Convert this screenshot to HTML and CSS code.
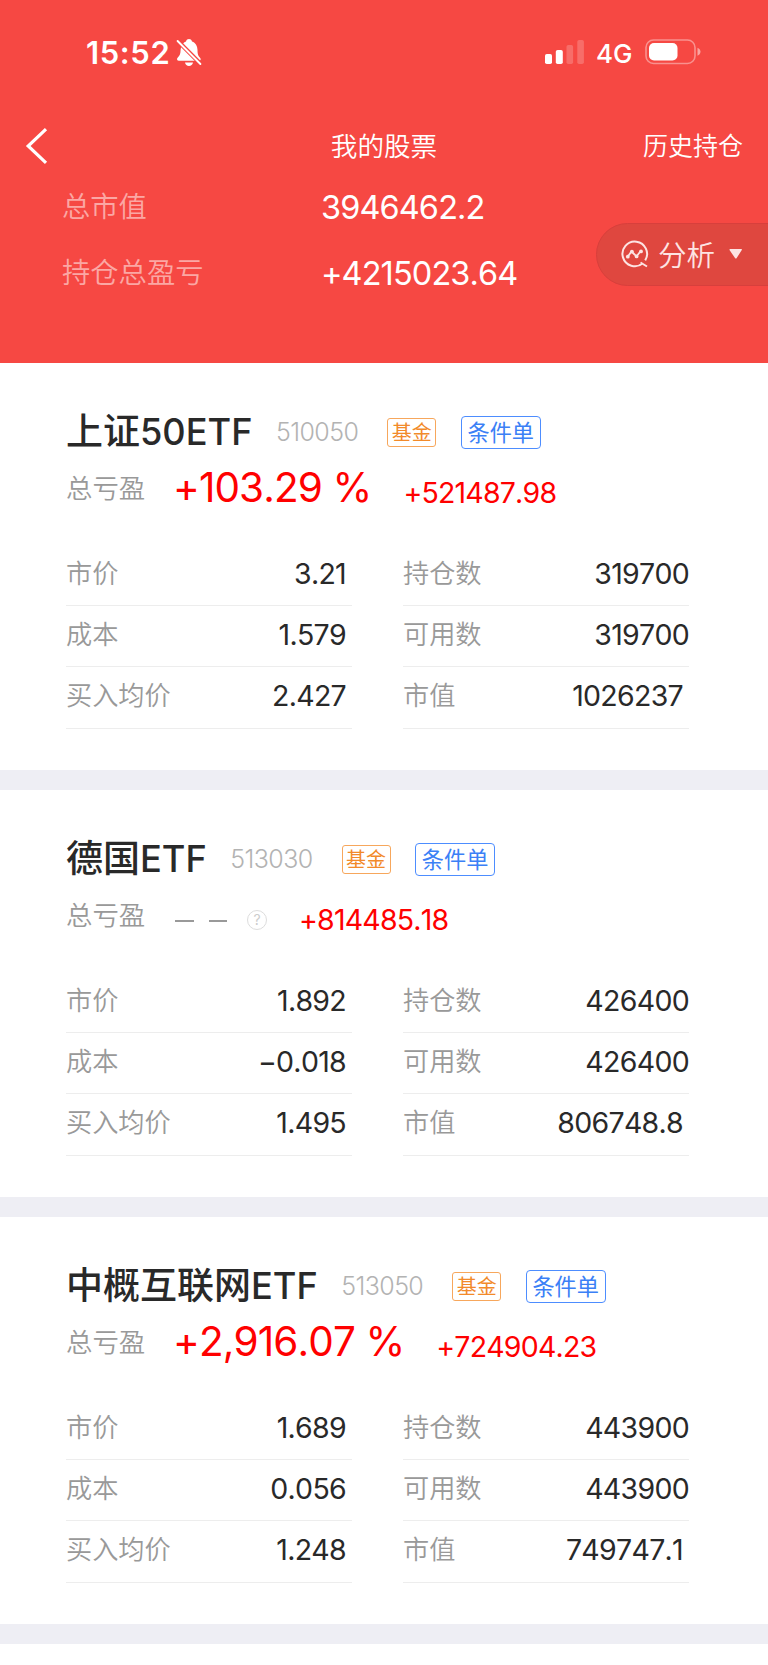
FILE: index.html
```html
<!DOCTYPE html>
<html lang="zh-CN">
<head>
<meta charset="utf-8">
<title>我的股票</title>
<link rel="stylesheet" href="styles.css">
</head>
<body>
<header class="header">
  <div class="status">
    <span class="time">15:52</span>
    <svg class="bell" width="26" height="28" viewBox="0 0 26 28"><path d="M5 8.5C6 5 7.800 3.200 10 2.400C10.500 .8 11.600 0 13 0S15.500 .8 16 2.400C19.600 3.600 21.500 7 21.500 11C21.500 15.500 22.500 17.200 24 18.700C25.400 20.200 24.600 21.800 23 21.800H3C1 21.800 .4 20 1.800 18.600C3.800 16.700 4.500 14.500 4.600 11ZM9 23.600H17C16.600 25.800 15 27 13 27S9.400 25.800 9 23.600Z" fill="#fff"/><path d="M1.400 1.600L25 25.200" stroke="#f64843" stroke-width="4.200"/><path d="M1.600 2L24.400 25" stroke="#fff" stroke-width="1.900" stroke-linecap="round"/></svg>
    <svg class="signal" width="40" height="26" viewBox="0 0 40 26" fill="#fff"><rect x="0" y="15" width="7" height="10" rx="1.800"/><rect x="10.800" y="11" width="7" height="14" rx="1.800"/><g opacity=".2"><rect x="21.500" y="6" width="6.600" height="19" rx="1.800"/><rect x="32.300" y="1" width="6.600" height="24" rx="1.800"/></g></svg>
    <span class="net">4G</span>
    <svg class="battery" width="58" height="27" viewBox="0 0 58 27"><rect x="1" y="1" width="49" height="23.500" rx="7.500" fill="none" stroke="#fff" stroke-opacity=".4" stroke-width="1.600"/><rect x="4" y="4" width="28.500" height="17.500" rx="5" fill="#fff"/><path d="M52.500 8.800C54.200 9.500 55.500 10.800 55.500 12.800S54.200 16.100 52.500 16.800Z" fill="#fff" fill-opacity=".5"/></svg>
  </div>
  <nav class="nav">
    <svg class="back" width="23" height="36" viewBox="0 0 23 36"><path d="M21 1.200L3.200 18L21 34.800" fill="none" stroke="#fff" stroke-width="3.200"/></svg>
    <h1 class="title">我的股票</h1>
    <a class="history">历史持仓</a>
  </nav>
  <dl class="totals">
    <dt>总市值</dt><dd>3946462.2</dd>
    <dt>持仓总盈亏</dt><dd>+4215023.64</dd>
  </dl>
  <button class="analysis">
    <svg width="28" height="28" viewBox="0 0 28 28" fill="none" stroke="#fde4e3" stroke-width="2"><path d="M21.800 23.200A12.300 12.300 0 1 1 24.200 20.400M19.500 22.500L26 26.500"/><path d="M6.500 17L10.500 11.500L15.500 16.500L19.500 11.200" stroke-width="1.800"/><g fill="#fde4e3" stroke="none"><circle cx="6.800" cy="16.700" r="1.900"/><circle cx="10.900" cy="11.600" r="1.900"/><circle cx="15.600" cy="16.400" r="1.900"/><circle cx="20" cy="11.400" r="1.900"/></g></svg>
    <span>分析</span>
    <svg width="14" height="10" viewBox="0 0 14 10"><path d="M1.200 0H12.200Q13.500 0 12.800 1L7.700 9Q6.800 10 6 9L.5 1Q0 0 1.200 0Z" fill="#fde4e3"/></svg>
  </button>
</header>
<main>
  <section class="card">
    <div class="head"><h2 class="name">上证<span>50ETF</span></h2><span class="code">510050</span><span class="tag">基金</span><span class="order">条件单</span></div>
    <div class="profit"><span class="label">总亏盈</span><span class="pct">+103.29 %</span><span class="amount">+521487.98</span></div>
    <div class="grid">
      <div class="cell"><span>市价</span><b>3.21</b></div><div class="cell"><span>持仓数</span><b>319700</b></div>
      <div class="cell"><span>成本</span><b>1.579</b></div><div class="cell"><span>可用数</span><b>319700</b></div>
      <div class="cell"><span>买入均价</span><b>2.427</b></div><div class="cell"><span>市值</span><b>1026237</b></div>
    </div>
  </section>
  <section class="card">
    <div class="head"><h2 class="name">德国<span>ETF</span></h2><span class="code">513030</span><span class="tag">基金</span><span class="order">条件单</span></div>
    <div class="profit"><span class="label">总亏盈</span><span class="none"><i></i><i></i></span><span class="help">?</span><span class="amount">+814485.18</span></div>
    <div class="grid">
      <div class="cell"><span>市价</span><b>1.892</b></div><div class="cell"><span>持仓数</span><b>426400</b></div>
      <div class="cell"><span>成本</span><b>−0.018</b></div><div class="cell"><span>可用数</span><b>426400</b></div>
      <div class="cell"><span>买入均价</span><b>1.495</b></div><div class="cell"><span>市值</span><b>806748.8</b></div>
    </div>
  </section>
  <section class="card">
    <div class="head"><h2 class="name">中概互联网<span>ETF</span></h2><span class="code">513050</span><span class="tag">基金</span><span class="order">条件单</span></div>
    <div class="profit"><span class="label">总亏盈</span><span class="pct">+2,916.07 %</span><span class="amount">+724904.23</span></div>
    <div class="grid">
      <div class="cell"><span>市价</span><b>1.689</b></div><div class="cell"><span>持仓数</span><b>443900</b></div>
      <div class="cell"><span>成本</span><b>0.056</b></div><div class="cell"><span>可用数</span><b>443900</b></div>
      <div class="cell"><span>买入均价</span><b>1.248</b></div><div class="cell"><span>市值</span><b>749747.1</b></div>
    </div>
  </section>
</main>
</body>
</html>
```
FILE: styles.css
```css
* { box-sizing: border-box; }
body {
  margin: 0;
  height: 1665px;
  overflow: hidden;
  background: #fff;
  font-family: "Noto Sans CJK SC", sans-serif;
  font-weight: 350;
  white-space: nowrap;
}
h1, h2, dl, dd { margin: 0; font-weight: inherit; }
svg { display: block; flex: none; }
.time, .net, .totals dd, .name span, .code, .pct, .amount, .cell b, .help {
  font-family: Inter, "Noto Sans CJK SC", sans-serif;
  font-kerning: none;
}
.header {
  position: relative;
  height: 363px;
  background: #f64843;
  color: #fff;
}
.status {
  display: flex;
  align-items: flex-start;
  height: 113px;
  padding: 39px 65px 0 86px;
}
.time { width: 90px; font-size: 31px; font-weight: 600; line-height: 28px; letter-spacing: .6px; }
.signal { margin-left: auto; }
.net { width: 37px; margin-left: 11px; font-size: 26px; font-weight: 500; line-height: 29px; }
.battery { margin-left: 12px; }
.nav {
  display: grid;
  grid-template-columns: 140px 1fr 140px;
  align-items: center;
  height: 65px;
  padding: 0 25px;
}
.title { padding-bottom: 2px; font-size: 26.6px; line-height: 40px; text-align: center; }
.history { padding-bottom: 3px; font-size: 25px; line-height: 40px; text-align: right; }
.totals {
  display: grid;
  grid-template-columns: 259px 1fr;
  grid-auto-rows: 66px;
  padding: 0 0 0 62px;
  margin-top: -5px;
  align-items: center;
}
.totals dt { padding-bottom: 3px; font-size: 28.3px; line-height: 40px; color: #fba7a4; }
.totals dd { padding-top: 3px; font-size: 32.5px; font-weight: 400; line-height: 40px; letter-spacing: -.9px; }
.analysis {
  position: absolute;
  right: -1px;
  top: 223px;
  width: 173px;
  height: 63px;
  display: flex;
  align-items: center;
  padding: 0 0 2px 24px;
  border: 1.5px solid #d83f3c;
  border-radius: 32px 0 0 32px;
  background: #df473f;
  color: #fde4e3;
  font: 350 28.5px/40px "Noto Sans CJK SC", sans-serif;
}
.analysis span { margin: 0 14px 0 9px; }
.card { height: 427px; padding: 45px 79px 0 66px; border-bottom: 20px solid #eeeef4; }
.head { display: flex; align-items: center; height: 48px; }
.name { padding-bottom: 3px; font-size: 37px; font-weight: 500; line-height: 48px; color: #292929; }
.name span { font-size: 36.2px; }
.code { margin-left: 23.5px; font-size: 25px; letter-spacing: -.6px; color: #b3b3b3; }
.tag {
  margin-left: 29px;
  width: 49px;
  height: 29px;
  border: 1px solid #f7a75c;
  border-radius: 3px;
  color: #f28a2a;
  font-size: 20px;
  font-weight: 400;
  line-height: 26px;
  text-align: center;
}
.order {
  margin-left: 24.5px;
  width: 80px;
  height: 33px;
  border: 1.5px solid #4d8dff;
  border-radius: 4px;
  color: #3b80f6;
  font-size: 22.2px;
  font-weight: 400;
  line-height: 29px;
  text-align: center;
}
.profit { display: flex; height: 67px; line-height: 62px; color: #f00; }
.label { width: 109px; font-size: 26.4px; color: #999; }
.pct { margin: 0 32px 0 -2px; padding-top: 1px; font-size: 40.5px; font-weight: 400; letter-spacing: -.9px; }
.amount { padding-top: 6px; font-size: 28.5px; font-weight: 400; letter-spacing: -.8px; }
.none { display: flex; gap: 15px; padding-top: 37px; }
.none i { width: 18.5px; height: 2px; background: #999; }
.help {
  width: 20px;
  height: 20px;
  margin: 27px 32px 0 20px;
  border: 1.5px solid #ddd;
  border-radius: 50%;
  color: #ccc;
  font-size: 14px;
  font-weight: 400;
  line-height: 18px;
  text-align: center;
}
.grid {
  display: grid;
  grid-template-columns: 286px 286px;
  grid-auto-rows: 61.2px;
  column-gap: 51px;
  padding-top: 22px;
}
.cell { display: flex; justify-content: space-between; line-height: 55px; border-bottom: 1px solid #ededed; }
.cell span { font-size: 26.2px; color: #999; }
.cell b { padding: 1px 6px 0 0; font-size: 28.5px; font-weight: 400; letter-spacing: -.7px; color: #292929; }
.cell:nth-child(2) b, .cell:nth-child(4) b { padding-right: 0; }
```
